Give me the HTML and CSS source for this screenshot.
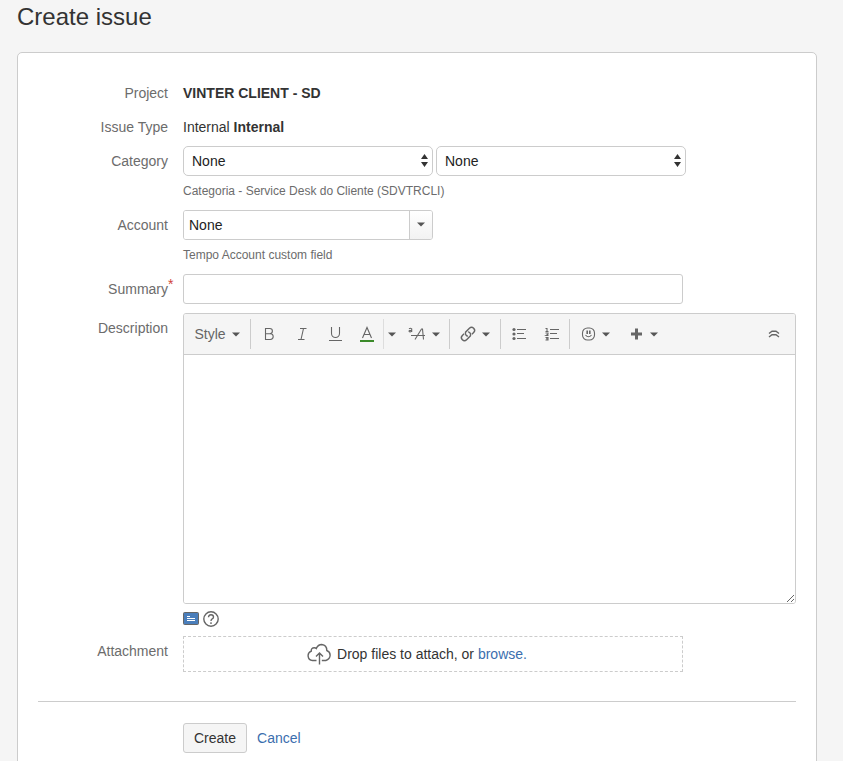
FILE: index.html
```html
<!DOCTYPE html>
<html lang="en">
<head>
    <meta charset="UTF-8">
    <meta name="viewport" content="width=device-width, initial-scale=1.0">
    <title>Create issue</title>
    <link rel="stylesheet" href="styles.css">
</head>
<body>
    <!-- shared icons -->
    <svg class="icon-defs" width="0" height="0" aria-hidden="true">
        <symbol id="caret" viewBox="0 0 8 5"><path d="M0 0.5h8L4 4.5z"/></symbol>
        <symbol id="updown" viewBox="0 0 7 13"><path d="M3.5 0L7 5H0zM0 8h7l-3.5 5z"/></symbol>
    </svg>

    <h1 class="page-title">Create issue</h1>

    <form class="card">
        <div class="field-group">
            <span class="label">Project</span>
            <div class="field-value"><strong>VINTER CLIENT - SD</strong></div>
        </div>

        <div class="field-group">
            <span class="label">Issue Type</span>
            <div class="field-value">Internal <strong>Internal</strong></div>
        </div>

        <div class="field-group">
            <label class="label" for="category">Category</label>
            <div class="field">
                <div class="select-row">
                    <div class="select-wrap">
                        <select id="category" class="select">
                            <option>None</option>
                        </select>
                        <svg class="select-arrows"><use href="#updown"/></svg>
                    </div>
                    <div class="select-wrap">
                        <select class="select" aria-label="Subcategory">
                            <option>None</option>
                        </select>
                        <svg class="select-arrows"><use href="#updown"/></svg>
                    </div>
                </div>
                <div class="description">Categoria - Service Desk do Cliente (SDVTRCLI)</div>
            </div>
        </div>

        <div class="field-group">
            <label class="label" for="account">Account</label>
            <div class="field">
                <div class="combo">
                    <input id="account" class="combo-input" type="text" value="None">
                    <button class="combo-button" type="button" aria-label="Open accounts"><svg class="caret"><use href="#caret"/></svg></button>
                </div>
                <div class="description">Tempo Account custom field</div>
            </div>
        </div>

        <div class="field-group">
            <label class="label" for="summary">Summary<span class="required">*</span></label>
            <div class="field">
                <input id="summary" class="text-input" type="text">
            </div>
        </div>

        <div class="field-group">
            <label class="label" for="description">Description</label>
            <div class="field">
                <div class="editor">
                    <div class="toolbar">
                        <div class="tool-group">
                            <button class="tool tool-menu" type="button">Style <svg class="caret"><use href="#caret"/></svg></button>
                        </div>
                        <div class="tool-group">
                            <button class="tool" type="button" aria-label="Bold">
                                <svg width="16" height="16" viewBox="0 0 16 16" class="stroke"><path d="M4.5 2.5h4.3a2.6 2.6 0 0 1 0 5.2H4.5zM4.500 7.700h4.800a2.900 2.900 0 0 1 0 5.800H4.500z"/></svg>
                            </button>
                            <button class="tool" type="button" aria-label="Italic">
                                <svg width="16" height="16" viewBox="0 0 16 16" class="stroke"><path d="M6 2.500h6.500M4 13.500h6.500M9.500 2.500L7 13.500"/></svg>
                            </button>
                            <button class="tool" type="button" aria-label="Underline">
                                <svg width="16" height="16" viewBox="0 0 16 16" class="stroke"><path d="M4.500 1v6.500a4 4 0 0 0 8 0V1M2 14.500h13"/></svg>
                            </button>
                            <button class="tool tool-color" type="button" aria-label="Text color">
                                <svg width="16" height="18" viewBox="0 0 16 18" class="stroke"><path d="M3.500 13L8 2.500 12.500 13M5 9.500h6"/><path class="color-bar" d="M1 16h14"/></svg>
                            </button>
                            <button class="tool tool-split" type="button" aria-label="More colors"><svg class="caret"><use href="#caret"/></svg></button>
                            <button class="tool tool-icon-menu" type="button" aria-label="More formatting">
                                <svg width="18" height="16" viewBox="0 0 18 16" class="stroke"><path d="M1 2.800q1.500-1 2.700 0v3.200M3.700 4.300q-2.800-.1-2.700 1 .8 1.200 2.700 0M3 9.500h14M7 13.500L13.500 3h1l1 10.500"/></svg>
                                <svg class="caret"><use href="#caret"/></svg>
                            </button>
                        </div>
                        <div class="tool-group">
                            <button class="tool tool-icon-menu" type="button" aria-label="Link">
                                <svg width="16" height="16" viewBox="0 0 16 16" class="stroke link-icon"><g transform="rotate(-45 8 8)"><path d="M6.500 9.500A3 3 0 0 1 7.500 5H13a3 3 0 0 1 0 6h-2.500"/><path d="M9.500 6.500a3 3 0 0 1-1 4.500H3a3 3 0 0 1 0-6h2.500"/></g></svg>
                                <svg class="caret"><use href="#caret"/></svg>
                            </button>
                        </div>
                        <div class="tool-group">
                            <button class="tool" type="button" aria-label="Bullet list">
                                <svg width="16" height="16" viewBox="0 0 16 16" class="stroke"><path d="M6 3.500h9M6 7.500h7M6 12.500h9"/><g class="dots"><circle cx="3" cy="3.500" r="1.600"/><circle cx="3" cy="8" r="1.600"/><circle cx="3" cy="12.500" r="1.600"/></g></svg>
                            </button>
                            <button class="tool" type="button" aria-label="Numbered list">
                                <svg width="16" height="16" viewBox="0 0 16 16" class="stroke"><path d="M6 3.500h9M6 7.500h7M6 12.500h9"/><path d="M1.500 2.500h1.500v2.500M1.500 5.500h3M1.500 7h2.500v1.200L2 9.500h2.500M1.500 11.500H4v2.500H1.500M2 12.700h2"/></svg>
                            </button>
                        </div>
                        <div class="tool-group">
                            <button class="tool tool-icon-menu" type="button" aria-label="Emoticons">
                                <svg width="16" height="16" viewBox="0 0 16 16" class="stroke"><rect x="2.500" y="2" width="12" height="12" rx="5"/><path d="M5.500 9q3 3.500 6 0"/><path class="eyes" d="M7.200 4.500V8M9.800 4.500V8"/></svg>
                                <svg class="caret"><use href="#caret"/></svg>
                            </button>
                            <button class="tool tool-icon-menu" type="button" aria-label="Insert">
                                <svg width="16" height="16" viewBox="0 0 16 16" class="stroke"><path class="plus" d="M8.500 2.500v11M3 8h11"/></svg>
                                <svg class="caret"><use href="#caret"/></svg>
                            </button>
                        </div>
                        <button class="tool tool-collapse" type="button" aria-label="Collapse toolbar">
                            <svg width="12" height="8" viewBox="0 0 12 8" class="stroke collapse-icon"><path d="M1 3.500L4 1.300h4L11 3.500M1 7l3-2.200h4L11 7"/></svg>
                        </button>
                    </div>
                    <textarea id="description" class="editor-text"></textarea>
                </div>
                <div class="editor-tools">
                    <button class="icon-button" type="button" aria-label="Preview">
                        <svg width="16" height="16" viewBox="0 0 16 16"><rect x=".5" y="1.500" width="15" height="12" rx="1" fill="#4a7ebb" stroke="#666"/><path d="M4 5.500h3M4 7.500h8M4 9.500h8" stroke="#fff"/></svg>
                    </button>
                    <button class="icon-button" type="button" aria-label="Help">
                        <svg width="16" height="16" viewBox="0 0 16 16" class="stroke help-icon"><circle cx="8" cy="8" r="7.200"/><path d="M5.500 6.300Q5.500 3.800 8 3.800t2.500 2.200q0 1.200-1.300 1.900Q8 8.600 8 10M8 11.200v1.800"/></svg>
                    </button>
                </div>
            </div>
        </div>

        <div class="field-group">
            <span class="label">Attachment</span>
            <div class="field">
                <div class="drop-zone">
                    <svg width="24" height="22" viewBox="0 0 24 22" class="stroke cloud-icon"><path d="M9.500 17.500H5.500A4.800 4.800 0 0 1 4.300 8.200Q4 4.800 7.300 4.800q1.200 0 2 .7Q11 1.500 14.800 1.500q5 .5 5 6 3.500 1.500 3.300 5t-4.300 5h-4M12.500 21.500V10M9 13.500l3.500-3.500 3.500 3.500"/></svg>
                    <span>Drop files to attach, or <a class="link" href="#">browse.</a></span>
                </div>
            </div>
        </div>

        <div class="buttons">
            <button class="button" type="submit">Create</button>
            <a class="link" href="#">Cancel</a>
        </div>
    </form>
</body>
</html>
```
FILE: styles.css
```css
* {
    box-sizing: border-box;
}

body {
    margin: 0;
    padding: 2px 26px 0 17px;
    background: #f5f5f5;
    color: #333;
    font-family: "Liberation Sans", Arial, sans-serif;
    font-size: 14px;
    line-height: 20px;
}

button,
input,
select,
textarea {
    font: inherit;
    color: inherit;
    margin: 0;
}

svg {
    display: block;
    flex: none;
}

.icon-defs {
    position: absolute;
}

.page-title {
    margin: 0 0 20px;
    font-size: 24px;
    font-weight: normal;
    line-height: 30px;
}

.card {
    background: #fff;
    border: 1px solid #ccc;
    border-radius: 5px;
    padding: 20px 20px 40px;
}

/* form rows */
.field-group {
    display: grid;
    grid-template-columns: 130px minmax(0, 1fr);
    column-gap: 15px;
    padding: 4px 0;
    margin-top: 1px;
}

.label {
    position: relative;
    padding-top: 5px;
    color: #6c6c6c;
    text-align: right;
}

.required {
    position: absolute;
    top: 0;
    left: 100%;
    color: #d04437;
}

.field-value {
    padding-top: 5px;
}

.description {
    margin-top: 5px;
    color: #6c6c6c;
    font-size: 12px;
}

.select-row {
    display: flex;
    gap: 3px;
}

.select-wrap {
    position: relative;
    width: 250px;
}

.select {
    appearance: none;
    display: block;
    width: 100%;
    height: 30px;
    padding: 0 20px 0 8px;
    background: #fff;
    border: 1px solid #ccc;
    border-radius: 5px;
    color: #222;
}

.select-arrows {
    position: absolute;
    top: 8px;
    right: 5px;
    width: 7px;
    height: 13px;
    fill: #333;
    pointer-events: none;
}

.combo {
    display: flex;
    width: 250px;
    height: 30px;
    border: 1px solid #ccc;
    border-radius: 3px;
    overflow: hidden;
}

.combo-input {
    flex: 1;
    min-width: 0;
    padding: 0 5px;
    border: none;
    color: #222;
}

.combo-button {
    display: flex;
    align-items: center;
    justify-content: center;
    width: 23px;
    padding: 0 1px 2px 0;
    background: linear-gradient(#fff, #f2f2f2);
    border: none;
    border-left: 1px solid #ccc;
}

.caret {
    width: 8px;
    height: 5px;
    fill: #555;
}

.text-input {
    display: block;
    width: 100%;
    max-width: 500px;
    height: 30px;
    padding: 0 5px;
    background: #fff;
    border: 1px solid #ccc;
    border-radius: 3px;
}

/* editor */
.editor {
    border: 1px solid #ccc;
    border-radius: 3px;
    overflow: hidden;
}

.toolbar {
    display: flex;
    align-items: center;
    height: 41px;
    background: #f5f5f5;
    border-bottom: 1px solid #ccc;
}

.tool-group {
    display: flex;
    height: 30px;
    padding: 0 1px;
}

.tool-group + .tool-group {
    border-left: 1px solid #ccc;
}

.tool {
    display: flex;
    align-items: center;
    justify-content: center;
    width: 33px;
    padding: 0;
    background: none;
    border: none;
    color: #666;
    cursor: pointer;
}

.tool-menu {
    gap: 6px;
    width: 64px;
}

.tool-color {
    border-right: 1px solid #ddd;
}

.tool-split {
    width: 16px;
}

.tool-icon-menu {
    gap: 6px;
    width: 48px;
}

.tool-collapse {
    margin-left: auto;
    width: 42px;
}

.stroke {
    fill: none;
    stroke: #666;
    stroke-width: 1.1;
}

.link-icon,
.help-icon,
.cloud-icon,
.collapse-icon {
    stroke-width: 1.4;
}

.link-icon {
    overflow: visible;
}

.color-bar {
    stroke: #3b8a2a;
    stroke-width: 2;
}

.dots {
    fill: #666;
    stroke: none;
}

.eyes {
    stroke-width: 1.6;
}

.plus {
    stroke-width: 3;
}

.editor-text {
    display: block;
    width: 100%;
    height: 248px;
    padding: 5px;
    background: #fff;
    border: none;
    resize: vertical;
}

.editor-tools {
    display: flex;
    gap: 4px;
    margin-top: 7px;
}

.icon-button {
    padding: 0;
    background: none;
    border: none;
    cursor: pointer;
}

.drop-zone {
    display: flex;
    align-items: center;
    justify-content: center;
    gap: 6px;
    max-width: 500px;
    height: 36px;
    padding-right: 32px;
    border: 1px dashed #ccc;
}

.link {
    color: #3b6eae;
    text-decoration: none;
}

.buttons {
    display: flex;
    align-items: center;
    gap: 10px;
    margin-top: 25px;
    padding: 21px 0 0 145px;
    border-top: 1px solid #ccc;
}

.button {
    height: 30px;
    padding: 0 10px;
    background: #f5f5f5;
    border: 1px solid #ccc;
    border-radius: 3px;
    cursor: pointer;
}
```
